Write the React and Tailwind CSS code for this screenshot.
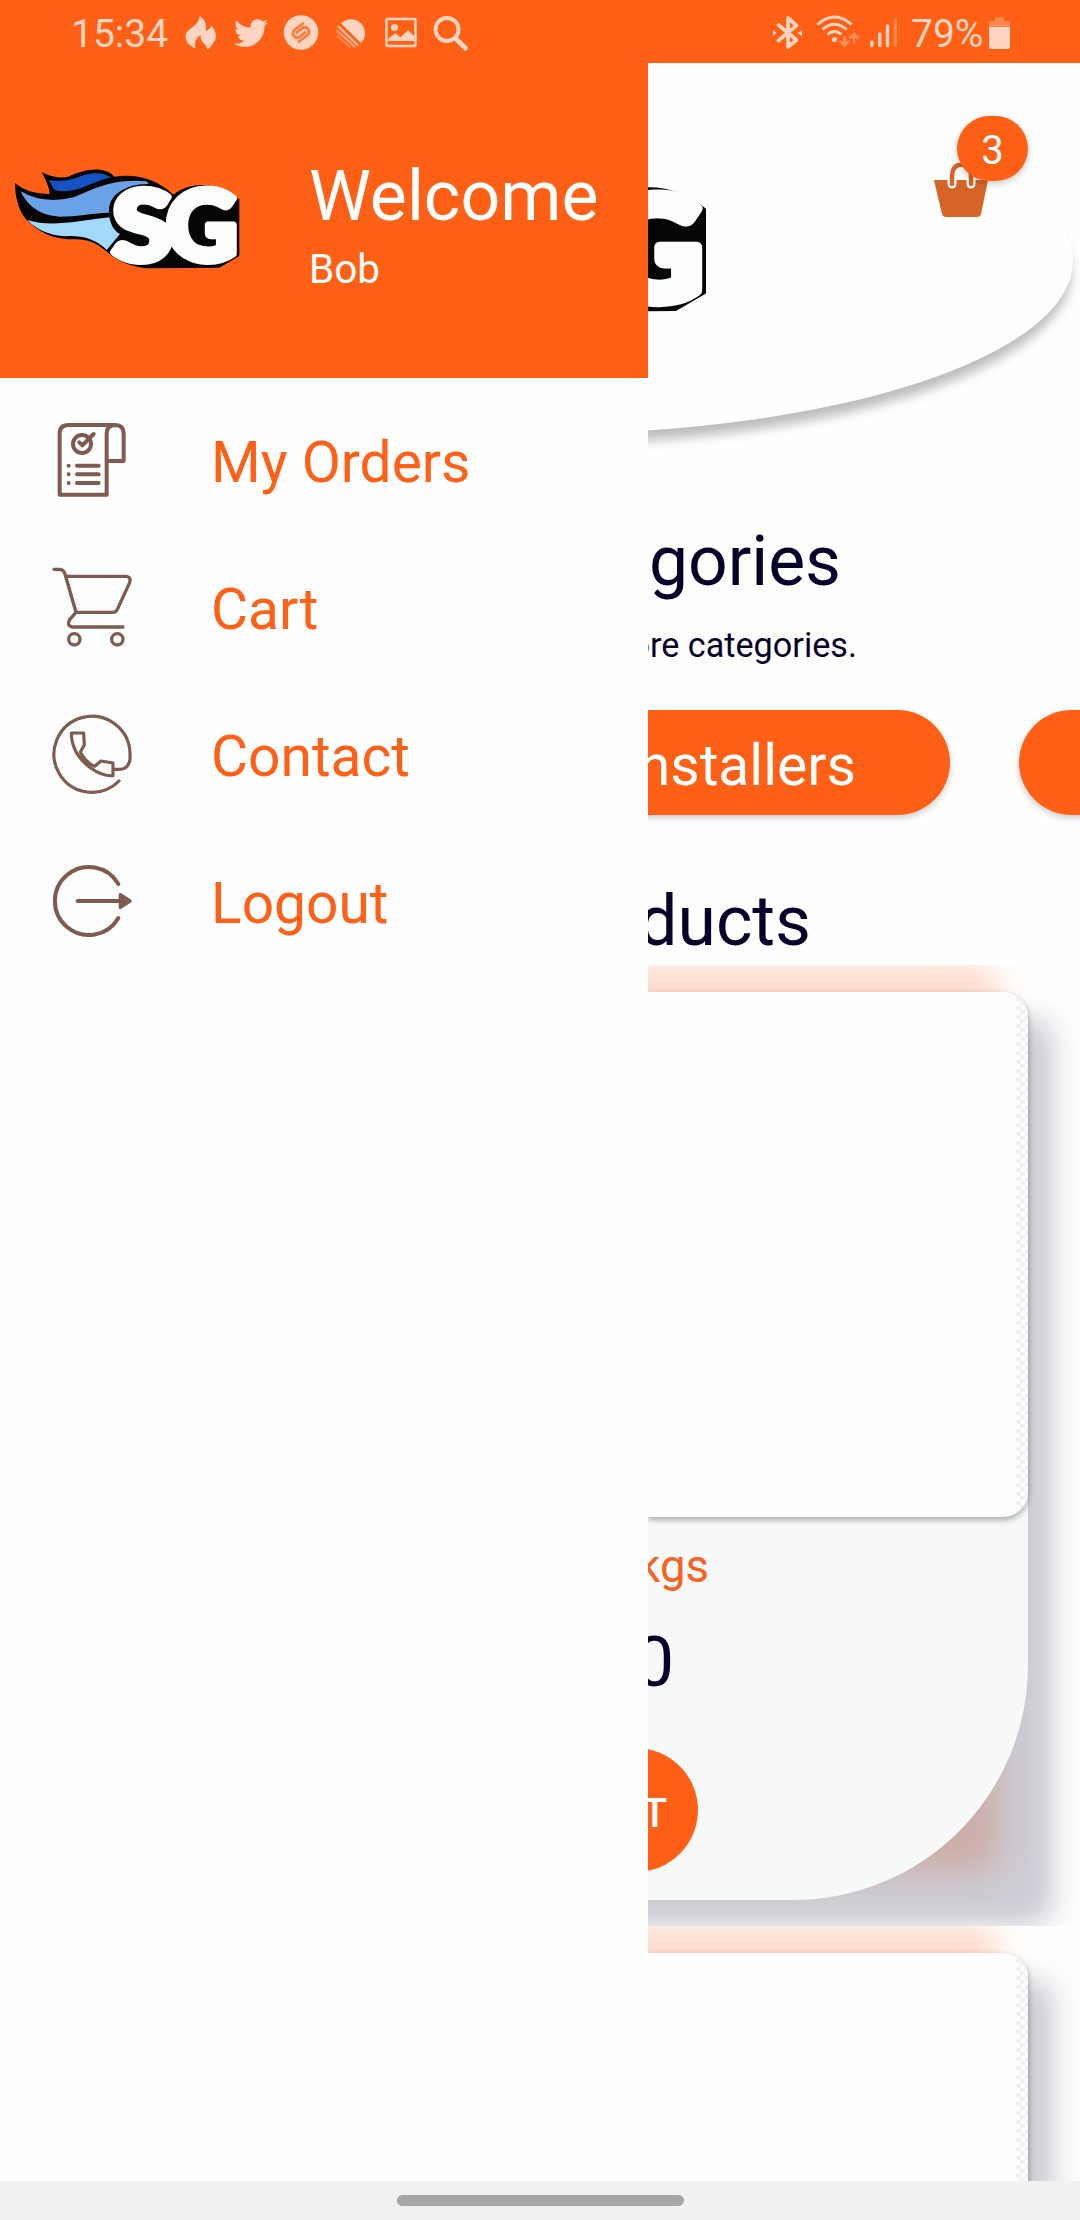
import React from "react";
import { FaTwitter } from "react-icons/fa";

/* Flame-tailed wordmark used in the drawer and in the page header */
function Logo({ className }) {
  return (
    <svg viewBox="42 54 678 303" className={className} preserveAspectRatio="none">
      <path
        d="M45 99Q85 133 148 132Q152 118 125 66Q165 88 205 80C240 64 290 48 330 68L344 80C400 70 470 84 520 134C570 94 650 92 718 148V318L658 353L440 355C390 350 345 330 318 303C285 275 255 265 215 268C150 268 110 240 78 208C55 180 45 140 45 99Z"
        fill="#050505"
      />
      <path d="M147 90Q190 98 228 84C270 64 310 66 333 82C290 92 260 112 222 120C190 127 165 122 160 116Z" fill="#1552c4" />
      <path d="M62 124Q130 164 220 142C270 124 330 84 440 94L446 102C380 100 320 136 328 188C270 190 230 200 180 200C120 198 80 165 62 124Z" fill="#6aa2e8" />
      <path d="M82 210C150 232 230 214 328 202C334 230 345 245 360 252L320 300C290 268 250 258 212 258C150 262 105 235 82 210Z" fill="#a3dafb" />
      <g fontFamily="Lato, sans-serif" fontWeight="900" fontSize="300" fill="#fcfdfd" stroke="#fcfdfd" strokeWidth="22" strokeLinejoin="round">
        <text transform="translate(336 332) scale(1.1 0.965)">S</text>
        <text transform="translate(498 332) scale(0.99 0.965)">G</text>
      </g>
    </svg>
  );
}

function StatusBar() {
  return (
    <div className="flex h-[63px] shrink-0 items-center justify-between bg-[#ff6016] pt-[3px] pr-[70px] pl-[71px] text-[#ffd5c2]">
      <div className="flex items-center gap-[14px]">
        <span className="w-[98px] pt-[3px] text-[39px] leading-none">15:34</span>
        <svg viewBox="183 15 36 36" className="size-9" fill="currentColor">
          <path d="M199.500 16C206 20 207 26 205.500 31C208.500 30 211 28 211.500 25.500C216 31 218 38 213 43.500C211.500 46 209.500 48 207.500 49.500C207 44 200 43 200.500 35C196 38 194 43 195.500 48.500C190 46 185.500 42 185.500 36.500C185.500 28 199 27 199.500 16Z" />
        </svg>
        <FaTwitter className="size-9 p-px" />
        <svg viewBox="283 15 36 36" className="size-9">
          <circle cx="301" cy="32.500" r="17.300" fill="currentColor" />
          <g fill="none" stroke="#ff7a3d" strokeWidth="2.800" strokeLinecap="round">
            <path d="M303 23.500L295 29.500C290.500 33.500 295 40 299.500 37L305 32.500" />
            <path d="M299 41.500L307 35.500C311.500 31.500 307 25 302.500 28L297 32.500" />
          </g>
        </svg>
        <svg viewBox="333 15 36 36" className="size-9">
          <path d="M341 23.500A13.500 13.500 0 1 1 361 43Z" fill="currentColor" />
          <g stroke="currentColor" strokeWidth="2.200" strokeLinecap="round">
            <path d="M338.500 26.500L357.500 45" opacity=".8" />
            <path d="M337.500 31L354.500 46.500" opacity=".6" />
            <path d="M338 36.500L350 47" opacity=".35" />
          </g>
        </svg>
        <svg viewBox="383 15 36 36" className="size-9">
          <rect x="386.500" y="19" width="29" height="27" rx="1" fill="none" stroke="currentColor" strokeWidth="2.500" />
          <circle cx="394.500" cy="27.500" r="3.500" fill="currentColor" />
          <path d="M388.500 41V38.500L395.500 33L400.500 37.500L408 30L414 36V41Z" fill="currentColor" />
        </svg>
        <svg viewBox="433 15 36 36" className="size-9" fill="none" stroke="currentColor">
          <circle cx="447" cy="29.500" r="11.500" strokeWidth="4" />
          <path d="M455 38L465.500 48" strokeWidth="5" strokeLinecap="round" />
        </svg>
      </div>
      <div className="flex items-center">
        <svg viewBox="769 15 36 36" className="mr-[9px] size-9">
          <path d="M777.500 25L795.500 40L787 47V18L795.500 25.500L777.500 40.500" fill="none" stroke="currentColor" strokeWidth="3.700" strokeLinejoin="round" strokeLinecap="round" />
          <path d="M772 30L775.500 33L772 36ZM801 30L796.500 33L801 36Z" fill="currentColor" />
        </svg>
        <svg viewBox="814 15 45 36" className="mr-[9px] h-9 w-[45px]" fill="none" stroke="currentColor">
          <g strokeWidth="2.800">
            <path d="M816.500 24.500Q833.500 9.500 850.500 24.500" />
            <path d="M821.500 29.500Q833.500 19 845.500 29.500" />
            <path d="M826.500 34.500Q833.500 28.500 840.500 34.500" />
          </g>
          <circle cx="833.500" cy="39.500" r="2.600" fill="currentColor" stroke="none" />
          <g strokeWidth="2.500" opacity=".4">
            <path d="M843.500 36V45M839 41L843.500 45.500L848 41" />
            <path d="M853 44V34M848.500 38.500L853 34L857.500 38.500" />
          </g>
        </svg>
        <svg viewBox="868 15 30 36" className="mr-[12px] h-9 w-[30px]" stroke="currentColor" strokeWidth="3.400" strokeLinecap="round">
          <path d="M870.800 42V45.500M878.700 34V45.500M886.500 26V45.500" />
          <path d="M894.300 19.500V45.500" opacity=".3" />
        </svg>
        <span className="mr-[5px] w-[73px] pt-[3px] text-[39px] leading-none">79%</span>
        <svg viewBox="988 15 21 36" className="h-9 w-[21px]" fill="currentColor">
          <path d="M994 17H1003V21H1009V27H988V21H994Z" opacity=".35" />
          <path d="M988 27H1009V47Q1009 49 1007 49H990Q988 49 988 47Z" />
        </svg>
      </div>
    </div>
  );
}

const OrdersIcon = () => (
  <svg viewBox="37 60 240 240" className="size-20" fill="none" stroke="#7f5a4e" strokeWidth="12">
    <path d="M227 75H86Q60 75 60 101V284H201V100Q201 76 227 75Q252 76 252 101V183H204" strokeLinejoin="round" />
    <circle cx="127" cy="132" r="27" />
    <path d="M119 127L128 136L162 102" strokeLinecap="round" strokeLinejoin="round" />
    <path d="M112 197H177M112 223H177M112 249H177" strokeLinecap="round" />
    <path d="M86.900 197h.1M86.900 223h.1M86.900 249h.1" strokeLinecap="round" />
  </svg>
);

const CartIcon = () => (
  <svg viewBox="37 500 240 240" className="size-20" fill="none" stroke="#7f5a4e" strokeWidth="10" strokeLinecap="round" strokeLinejoin="round">
    <path d="M43 507H60Q74 508 77 525L109 636L90 658Q80 676 98 680H250" />
    <path d="M78 528H261Q276 531 269 549L233 627Q229 636 219 636H109" />
    <circle cx="104" cy="717" r="17" />
    <circle cx="233" cy="717" r="17" />
  </svg>
);

const ContactIcon = () => (
  <svg viewBox="37 70 240 240" className="size-20" fill="none" stroke="#7f5a4e" strokeWidth="9.500" strokeLinecap="round" strokeLinejoin="round">
    <path d="M238 271A114 114 0 1 1 271 190V207Q265 236 240 236H224" />
    <path d="M95 127H132L134 163L122 184Q137 215 165 227L184 211L220 217V255Q190 258 152 231Q96 190 95 127Z" />
  </svg>
);

const LogoutIcon = () => (
  <svg viewBox="37 513 240 240" className="size-20" fill="none" stroke="#7f5a4e" strokeWidth="12" strokeLinecap="round">
    <path d="M236 582A102 102 0 1 0 236 684" />
    <path d="M114 633H240" />
    <path d="M242 614L271 633L242 652Z" fill="#7f5a4e" strokeWidth="10" strokeLinejoin="round" />
  </svg>
);

const menu = [
  { label: "My Orders", Icon: OrdersIcon },
  { label: "Cart", Icon: CartIcon },
  { label: "Contact", Icon: ContactIcon },
  { label: "Logout", Icon: LogoutIcon },
];

function Drawer() {
  return (
    <aside className="flex w-[648px] shrink-0 flex-col bg-[#fefefe]">
      <header className="flex h-[315px] items-start bg-[#ff6016] pl-[14px] text-white">
        <Logo className="mt-[105px] h-[101px] w-[226px] shrink-0" />
        <div className="mt-[98px] ml-[69px]">
          <h1 className="text-[69.800px] leading-[70px]">Welcome</h1>
          <p className="mt-[18px] text-[40.500px] leading-10">Bob</p>
        </div>
      </header>
      <nav className="pt-2">
        {menu.map(({ label, Icon }) => (
          <a key={label} className="flex h-[147px] items-center pl-[52px]">
            <Icon />
            <span className="mt-[7px] ml-[79px] text-[56.900px] leading-none text-[#ff6016]">{label}</span>
          </a>
        ))}
      </nav>
    </aside>
  );
}

function Basket() {
  return (
    <div className="relative mt-[75px] ml-[187px] h-[54px] w-[54px]">
      <svg viewBox="933 163 54 54" className="size-full">
        <path d="M933 180H987L980 214Q979 217 976 217H945Q942 217 941 214Z" fill="#d66429" />
        <path d="M951 184V175Q952 164 961 164Q970 164 970 175V184" fill="none" stroke="#fefefe" strokeWidth="9" strokeLinecap="round" />
        <path d="M951 184V175Q952 164.500 961 164.500Q970 164.500 970 175V184" fill="none" stroke="#d66429" strokeWidth="4.500" strokeLinecap="round" />
      </svg>
      <span className="absolute -top-[47px] left-[23px] flex h-[65px] w-[71px] items-center justify-center rounded-[33px] bg-[#ff6016] pt-1 text-[40px] text-white shadow-[0_3px_7px_rgba(0,0,0,0.2)]">
        3
      </span>
    </div>
  );
}

function ProductCard({ children }) {
  return (
    <article className="relative h-[961px] shrink-0 overflow-hidden bg-[#fefefe] pt-[27px]">
      <div className="absolute -top-px -left-[100px] h-[908px] w-[451px] rounded-[24px] bg-[#ff6016]/22 blur-[15px]" />
      <div className="absolute top-[53px] -left-[100px] h-[908px] w-[506px] rounded-[24px] bg-[#0a0028]/20 blur-[14px]" />
      <div className="relative h-[908px] w-[380px] rounded-tr-[25px] rounded-br-[235px] bg-[#f7f9f8]">
        <div className="flex h-[525px] justify-end overflow-hidden rounded-r-[25px] bg-[#fefefe] shadow-[0_3px_6px_rgba(0,0,0,0.32)]">
          <div className="w-3 bg-[repeating-conic-gradient(#f0f0f0_0_25%,#fefefe_0_50%)] bg-[length:9px_9px]" />
        </div>
        {children}
      </div>
    </article>
  );
}

function Shop() {
  return (
    <main className="flex w-[432px] flex-col overflow-hidden bg-[#fefefe] whitespace-nowrap text-[#08002b]">
      <header className="mt-[25px] -ml-[640px] flex h-[346px] w-[1065px] shrink-0 items-start rounded-[50%] bg-[#fefefe] pl-[360px] shadow-[0_12px_11px_-2px_rgba(0,0,0,0.26)]">
        <Logo className="mt-[74px] h-[151px] w-[339px] shrink-0" />
        <div className="ml-[40px]">
          <Basket />
        </div>
      </header>
      <h2 className="mt-[92px] flex h-[70px] w-[193px] shrink-0 justify-end text-[69.600px] leading-[70px]">gories</h2>
      <p className="mt-[29px] flex h-10 w-[209px] shrink-0 justify-end text-[34.200px] leading-10">ore categories.</p>
      <div className="mt-[45px] flex h-[105px] shrink-0 gap-[69px]">
        <div className="-ml-[60px] flex w-[362px] shrink-0 items-center justify-end rounded-full bg-[#ff6016] pt-[7px] pr-[94px] text-[57px] text-white shadow-[0_3px_7px_rgba(0,0,0,0.2)]">
          nstallers
        </div>
        <div className="w-[362px] shrink-0 rounded-full bg-[#ff6016] shadow-[0_3px_7px_rgba(0,0,0,0.2)]" />
      </div>
      <h2 className="mt-[71px] flex h-[70px] w-[163px] shrink-0 justify-end text-[69.600px] leading-[70px]">ducts</h2>
      <section className="mt-[9px] flex min-h-0 flex-1 flex-col overflow-hidden">
        <ProductCard>
          <p className="mt-[25px] flex h-[50px] w-[61px] justify-end text-[45.500px] leading-[50px] text-[#f9611c]">kgs</p>
          <p className="mt-[35px] flex h-[70px] w-[26px] justify-end text-[70px] leading-[70px]">0</p>
          <div className="mt-[51px] -ml-[100px] flex h-[124px] w-[150px] items-center justify-end rounded-full bg-[#ff6016] pt-[8px] pr-[31px] text-[40px] font-medium text-white">
            T
          </div>
        </ProductCard>
        <ProductCard />
      </section>
    </main>
  );
}

export default function App() {
  return (
    <div className="flex h-[2220px] w-[1080px] flex-col overflow-hidden bg-[#fefefe] font-['Roboto',sans-serif]">
      <StatusBar />
      <div className="flex min-h-0 flex-1">
        <Drawer />
        <Shop />
      </div>
      <div className="flex h-[39px] shrink-0 justify-center bg-[#f1f1f1] pt-[14px]">
        <div className="h-[11px] w-[287px] rounded-full bg-[#a6a6a6]" />
      </div>
    </div>
  );
}
